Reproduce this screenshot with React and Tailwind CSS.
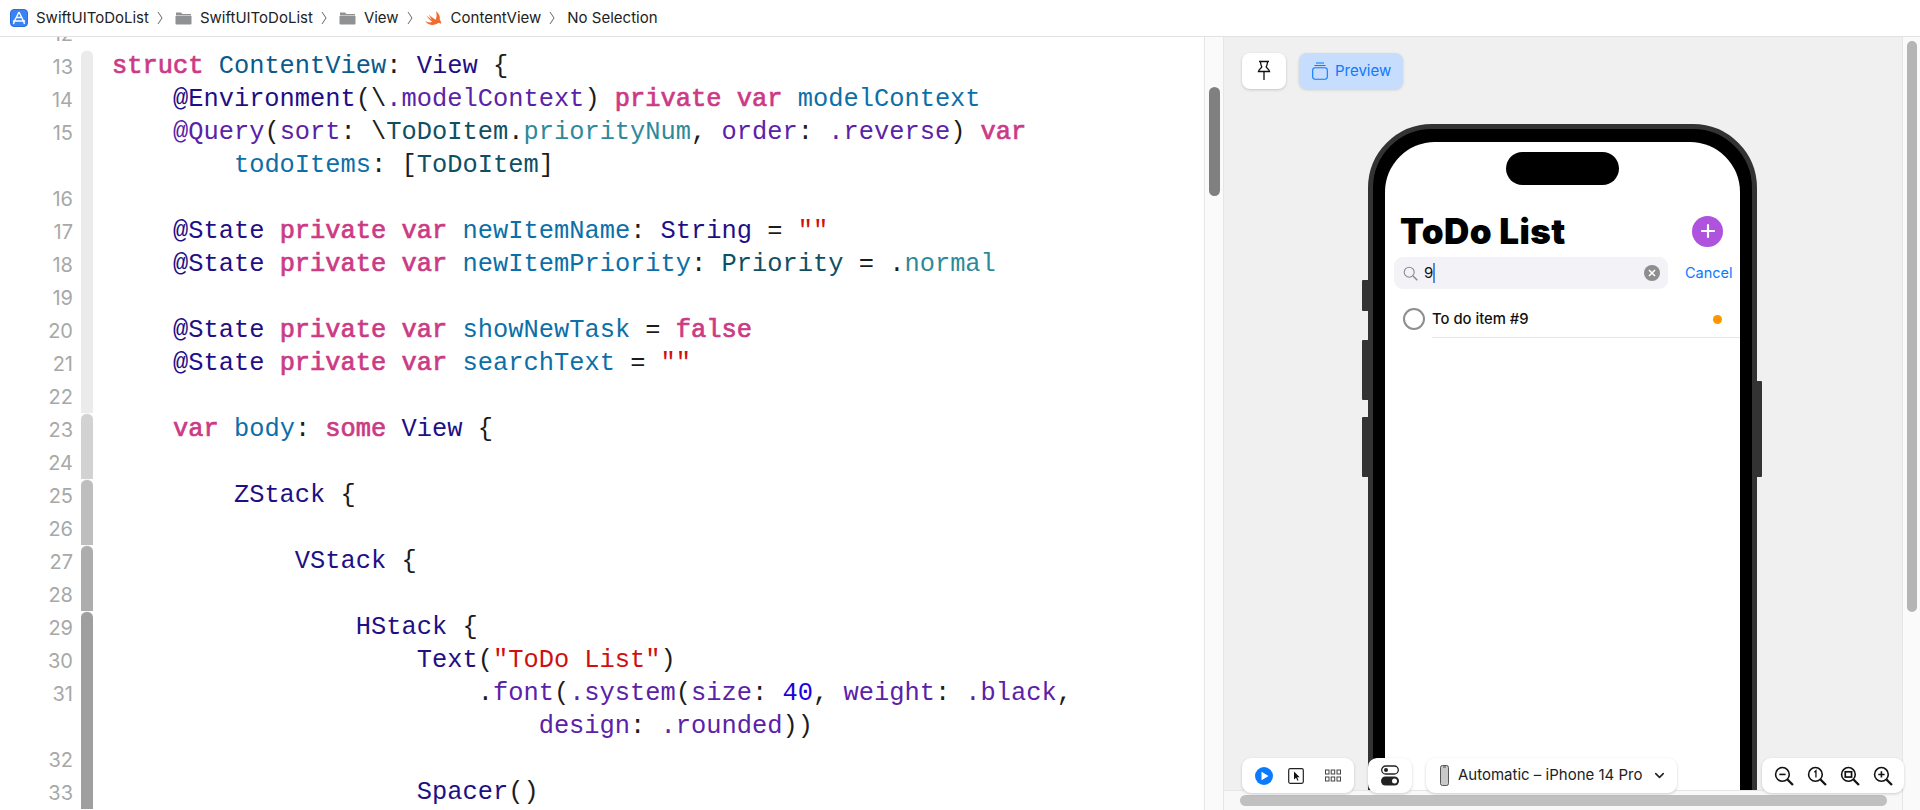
import React from "react";
import { ChevronDown } from "lucide-react";

const kw = "text-[#cc3a85] [-webkit-text-stroke:0.7px_#cc3a85]";
const navy = "text-[#1f0f85]";
const blue = "text-[#0b6fa8]";
const purple = "text-[#5b22a8]";
const teal = "text-[#2e8a9a]";
const type = "text-[#0f4f63]";
const decl = "text-[#0b5a8c]";
const red = "text-[#d01010]";
const num = "text-[#1c00e0]";

// n = line number (none on a wrapped row), top = first row of a ribbon segment
const rows = [
  { n: 12, ribbon: "" },
  { n: 13, top: true, ribbon: "bg-[#ebebeb]", tokens: [["struct", kw], " ", ["ContentView", decl], ": ", ["View", navy], " {"] },
  { n: 14, ribbon: "bg-[#ebebeb]", tokens: ["    ", ["@Environment", navy], "(\\", [".modelContext", purple], ") ", ["private", kw], " ", ["var", kw], " ", ["modelContext", blue]] },
  { n: 15, ribbon: "bg-[#ebebeb]", tokens: ["    ", ["@Query", purple], "(", ["sort", purple], ": \\", ["ToDoItem", type], ".", ["priorityNum", teal], ", ", ["order", purple], ": ", [".reverse", purple], ") ", ["var", kw]] },
  { ribbon: "bg-[#ebebeb]", tokens: ["        ", ["todoItems", blue], ": [", ["ToDoItem", type], "]"] },
  { n: 16, ribbon: "bg-[#ebebeb]" },
  { n: 17, ribbon: "bg-[#ebebeb]", tokens: ["    ", ["@State", navy], " ", ["private", kw], " ", ["var", kw], " ", ["newItemName", blue], ": ", ["String", navy], " = ", ['""', red]] },
  { n: 18, ribbon: "bg-[#ebebeb]", tokens: ["    ", ["@State", navy], " ", ["private", kw], " ", ["var", kw], " ", ["newItemPriority", blue], ": ", ["Priority", type], " = .", ["normal", teal]] },
  { n: 19, ribbon: "bg-[#ebebeb]" },
  { n: 20, ribbon: "bg-[#ebebeb]", tokens: ["    ", ["@State", navy], " ", ["private", kw], " ", ["var", kw], " ", ["showNewTask", blue], " = ", ["false", kw]] },
  { n: 21, ribbon: "bg-[#ebebeb]", tokens: ["    ", ["@State", navy], " ", ["private", kw], " ", ["var", kw], " ", ["searchText", blue], " = ", ['""', red]] },
  { n: 22, ribbon: "bg-[#ebebeb]" },
  { n: 23, top: true, ribbon: "bg-[#d2d2d2]", tokens: ["    ", ["var", kw], " ", ["body", blue], ": ", ["some", kw], " ", ["View", navy], " {"] },
  { n: 24, ribbon: "bg-[#d2d2d2]" },
  { n: 25, top: true, ribbon: "bg-[#bebebe]", tokens: ["        ", ["ZStack", navy], " {"] },
  { n: 26, ribbon: "bg-[#bebebe]" },
  { n: 27, top: true, ribbon: "bg-[#adadad]", tokens: ["            ", ["VStack", navy], " {"] },
  { n: 28, ribbon: "bg-[#adadad]" },
  { n: 29, top: true, ribbon: "bg-[#9f9f9f]", tokens: ["                ", ["HStack", navy], " {"] },
  { n: 30, ribbon: "bg-[#9f9f9f]", tokens: ["                    ", ["Text", navy], "(", ['"ToDo List"', red], ")"] },
  { n: 31, ribbon: "bg-[#9f9f9f]", tokens: ["                        .", ["font", purple], "(", [".system", purple], "(", ["size", purple], ": ", ["40", num], ", ", ["weight", purple], ": ", [".black", purple], ","] },
  { ribbon: "bg-[#9f9f9f]", tokens: ["                            ", ["design", purple], ": ", [".rounded", purple], "))"] },
  { n: 32, ribbon: "bg-[#9f9f9f]" },
  { n: 33, ribbon: "bg-[#9f9f9f]", tokens: ["                    ", ["Spacer", navy], "()"] },
];

function Chevron() {
  return (
    <svg width="6" height="14" viewBox="0 0 6 14" fill="none" stroke="#666" strokeWidth="1" className="shrink-0">
      <path d="M1 1l4 6-4 6" />
    </svg>
  );
}

function Folder() {
  return (
    <svg width="17" height="14" viewBox="0 0 17 14" fill="#8f9192" className="shrink-0">
      <path d="M1 1.5h5l1.5 1.5h8.500v1.500H1z" />
      <path d="M0.500 5h16v7.500a1 1 0 0 1-1 1h-14a1 1 0 0 1-1-1z" />
    </svg>
  );
}

function Crumb({ icon, label }) {
  return (
    <>
      {icon}
      <span className="ml-[8px]">{label}</span>
      <span className="mr-[12px] ml-[8px]"><Chevron /></span>
    </>
  );
}

function AppIcon() {
  return (
    <svg width="18" height="18" viewBox="0 0 18 18" className="shrink-0">
      <rect x="0.500" y="0.500" width="17" height="17" rx="3.500" fill="#3b82f6" stroke="#2a6fe0" />
      <path d="M9 3L4.500 12M9 3l4.500 9M3 12h12M7 8.500h4M4.500 12L3.500 15M13.500 12l1 3" stroke="#fff" strokeWidth="1.400" fill="none" />
    </svg>
  );
}

function SwiftIcon() {
  return (
    <svg width="18" height="17" viewBox="0 0 18 17" className="shrink-0">
      <path
        d="M11 1c3 2.500 4.600 5.800 3.700 8.600 1.200 1.600 1.600 3 1.400 4.400-.8-1-1.900-1.300-2.900-.9C11 14.900 7 15.600 4 14.300 2.500 13.700 1.200 12.600.5 11.300c2 1.300 4.700 1.600 6.800.5C5 10.200 2.800 8 1.300 5.600c2 1.800 4.300 3.400 6.200 4.400C6 8.500 4.600 6.500 3.700 4.400c2.500 2.300 5 4.200 7 5.300C11.800 7.400 12 4 11 1z"
        fill="#f26b2e"
      />
    </svg>
  );
}

function Breadcrumbs() {
  return (
    <div className="relative z-10 flex h-[37px] shrink-0 items-center border-b border-[#e2e2e2] bg-white pl-[10px] text-[15px] text-[#222]">
      <Crumb icon={<AppIcon />} label="SwiftUIToDoList" />
      <Crumb icon={<Folder />} label="SwiftUIToDoList" />
      <Crumb icon={<Folder />} label="View" />
      <Crumb icon={<SwiftIcon />} label="ContentView" />
      <span>No Selection</span>
    </div>
  );
}

function CodeRow({ row }) {
  return (
    <div className="flex h-[33px] items-center">
      <div className="w-[73px] shrink-0 text-right font-['Inter',sans-serif] text-[20px] text-[#a8a8a8]">{row.n}</div>
      <div className={`ml-[8px] h-full w-[12px] shrink-0 ${row.ribbon} ${row.top ? "rounded-t-[6px] border-t border-[#f4f4f4]" : ""}`} />
      <pre className="ml-[19px] font-['Liberation_Mono',monospace] text-[25.4px] leading-[33px] text-[#1c1c1c]">
        {(row.tokens || []).map((t, i) =>
          typeof t === "string" ? <span key={i}>{t}</span> : <span key={i} className={t[1]}>{t[0]}</span>
        )}
      </pre>
    </div>
  );
}

function Editor() {
  return (
    <div className="min-w-0 flex-1 overflow-hidden bg-white">
      <div className="-mt-[20px]">
        {rows.map((row, i) => <CodeRow key={i} row={row} />)}
      </div>
    </div>
  );
}

function PinIcon() {
  return (
    <svg width="16" height="22" viewBox="0 0 16 22" fill="none" stroke="#111" strokeWidth="1.300">
      <path d="M3 1.500h10M4.500 1.500c0 3 .8 4 1.300 5.500-.7 1.500-2.800 2.200-3.300 4.500h11c-.5-2.300-2.600-3-3.300-4.500.5-1.500 1.300-2.500 1.300-5.500M8 11.500V20" />
    </svg>
  );
}

function PreviewIcon() {
  return (
    <svg width="16" height="18" viewBox="0 0 16 18" fill="none" stroke="#0a7aff" strokeWidth="1.100">
      <path d="M4 1h8M2.500 3.500h11" />
      <rect x="0.700" y="5.700" width="14.600" height="11.600" rx="2.500" />
    </svg>
  );
}

function Phone() {
  return (
    <div className="relative h-[860px] w-[389px] shrink-0 rounded-[64px] border-[5px] border-[#333] bg-black px-[12px] pt-[13px]">
      <span className="absolute top-[151px] -left-[11px] h-[31px] w-[6px] rounded-l-[1px] bg-[#333]" />
      <span className="absolute top-[211px] -left-[11px] h-[60px] w-[6px] rounded-l-[1px] bg-[#333]" />
      <span className="absolute top-[288px] -left-[11px] h-[60px] w-[6px] rounded-l-[1px] bg-[#333]" />
      <span className="absolute top-[252px] -right-[10px] h-[96px] w-[5px] rounded-r-[1px] bg-[#333]" />
      <div className="h-full overflow-hidden rounded-[50px] bg-white pt-[10px]">
        <div className="mx-auto h-[33px] w-[113px] rounded-full bg-black" />
        <div className="mt-[26px] flex items-center justify-between pr-[17px] pl-[15px]">
          <span className="font-['Inter',sans-serif] text-[35px] leading-[40px] font-black tracking-[0.4px] text-black">ToDo List</span>
          <span className="flex h-[31px] w-[31px] items-center justify-center rounded-full bg-[#af52de]">
            <svg width="16" height="16" viewBox="0 0 16 16" stroke="#fff" strokeWidth="2.200" strokeLinecap="round"><path d="M8 2v12M2 8h12" /></svg>
          </span>
        </div>
        <div className="mt-[6px] flex items-center pl-[9px]">
          <div className="flex h-[32px] w-[274px] items-center rounded-[9px] bg-[#f2f2f7] pr-[8px] pl-[9px]">
            <svg width="15" height="15" viewBox="0 0 15 15" fill="none" stroke="#8a8a8e" strokeWidth="1.100"><circle cx="6.200" cy="6.200" r="5" /><path d="M10 10l4.300 4.300" strokeWidth="1.500" /></svg>
            <span className="ml-[6px] font-['Inter',sans-serif] text-[15px] text-[#111]">9</span>
            <span className="h-[20px] w-[1.500px] bg-[#4a90e8]" />
            <span className="ml-auto flex h-[16px] w-[16px] items-center justify-center rounded-full bg-[#8e8e8e]">
              <svg width="8" height="8" viewBox="0 0 8 8" stroke="#fff" strokeWidth="1.600"><path d="M1 1l6 6M7 1L1 7" /></svg>
            </span>
          </div>
          <span className="ml-[17px] font-['Inter',sans-serif] text-[14.500px] text-[#0a7aff]">Cancel</span>
        </div>
        <div className="mt-[12px] flex h-[36px] items-center pr-[18px] pl-[18px]">
          <span className="h-[22px] w-[22px] shrink-0 rounded-full border-[2.500px] border-[#8e8e8e]" />
          <span className="ml-[7px] font-['Inter',sans-serif] text-[14.800px] font-[450] text-[#111]">To do item #9</span>
          <span className="ml-auto h-[9px] w-[9px] rounded-full bg-[#ff9500]" />
        </div>
        <div className="ml-[47px] h-px bg-[#e5e5ea]" />
      </div>
    </div>
  );
}

function Magnifier({ children }) {
  return (
    <svg width="20" height="20" viewBox="0 0 19 19" fill="none" stroke="#111" strokeWidth="1.500">
      <circle cx="8" cy="8" r="6.500" />
      <path d="M12.800 12.800L18 18" strokeWidth="2.200" />
      {children}
    </svg>
  );
}

function BottomBar() {
  const tool = "flex h-[35px] items-center rounded-[9px] bg-white shadow-[0_1px_3px_rgba(0,0,0,0.18)]";
  return (
    <div className="absolute right-[-2px] bottom-[17px] left-[18px] flex items-center">
      <div className={`${tool} w-[112px] pl-[13px]`}>
        <svg width="18" height="18" viewBox="0 0 18 18"><circle cx="9" cy="9" r="9" fill="#0a7aff" /><path d="M6.500 4.800v8.400L13.500 9z" fill="#fff" /></svg>
        <svg width="16" height="16" viewBox="0 0 16 16" fill="none" className="ml-[15px]"><rect x="0.700" y="0.700" width="14.600" height="14.600" rx="1.500" stroke="#222" strokeWidth="1.200" /><path d="M6 3.500v8l2-1.800 1.500 3 1-.5-1.400-3h2.600z" fill="#111" /></svg>
        <svg width="16" height="14" viewBox="0 0 16 14" fill="none" stroke="#444" strokeWidth="1" className="ml-[21px]">
          <rect x="0.500" y="1" width="3.500" height="4" /><rect x="6.200" y="1" width="3.500" height="4" /><rect x="12" y="1" width="3.500" height="4" />
          <rect x="0.500" y="8" width="3.500" height="4" /><rect x="6.200" y="8" width="3.500" height="4" /><rect x="12" y="8" width="3.500" height="4" />
        </svg>
      </div>
      <div className={`${tool} ml-[14px] w-[44px] justify-center`}>
        <svg width="18" height="21" viewBox="0 0 18 21" fill="none">
          <rect x="0.700" y="1" width="16.600" height="8" rx="4" stroke="#222" strokeWidth="1.300" /><circle cx="5" cy="5" r="2" fill="#222" />
          <rect x="0" y="11.500" width="18" height="9" rx="4.500" fill="#222" /><circle cx="13.500" cy="16" r="2.500" fill="#fff" />
        </svg>
      </div>
      <div className={`${tool} ml-[14px] w-[251px] pl-[14px] font-['Inter',sans-serif] text-[15px] text-[#222]`}>
        <svg width="9" height="21" viewBox="0 0 9 21" fill="none" className="mr-[9px]"><rect x="0.500" y="0.500" width="8" height="20" rx="2" fill="#c8c8c8" stroke="#555" /><path d="M3 2h3" stroke="#555" /></svg>
        Automatic – iPhone 14 Pro
        <ChevronDown size={15} strokeWidth={2.500} className="ml-[10px] text-[#222]" />
      </div>
      <div className={`${tool} ml-auto w-[142px] justify-center gap-[13px]`}>
        <Magnifier><path d="M5 8h6" /></Magnifier>
        <Magnifier><path d="M7 6l1.500-1.500V11" strokeWidth="1.200" /></Magnifier>
        <Magnifier><rect x="5" y="5.500" width="6" height="5" strokeWidth="1.600" /></Magnifier>
        <Magnifier><path d="M5 8h6M8 5v6" /></Magnifier>
      </div>
    </div>
  );
}

function Preview() {
  return (
    <div className="relative flex w-[678px] shrink-0 flex-col bg-[#f0f0f0]">
      <div className="min-h-0 flex-1 overflow-hidden px-[18px] pt-[16px]">
        <div className="flex gap-[13px]">
          <button className="flex h-[36px] w-[44px] items-center justify-center rounded-[8px] bg-white shadow-[0_1px_3px_rgba(0,0,0,0.18)]"><PinIcon /></button>
          <button className="flex h-[36px] w-[104px] items-center gap-[7px] rounded-[8px] bg-[#c7ddfd] pl-[13px] font-['Inter',sans-serif] text-[15px] text-[#0a7aff] shadow-[0_1px_3px_rgba(0,0,0,0.15)]">
            <PreviewIcon />Preview
          </button>
        </div>
        <div className="mt-[35px] flex justify-center pr-px"><Phone /></div>
      </div>
      <div className="flex h-[20px] shrink-0 items-center border-t border-[#e6e6e6] bg-[#f8f8f8] pl-[16px]">
        <div className="h-[11px] w-[647px] rounded-full bg-[#c0c0c0]" />
      </div>
      <BottomBar />
    </div>
  );
}

export default function App() {
  return (
    <div className="flex h-[810px] w-[1920px] flex-col overflow-hidden bg-white font-['Inter',sans-serif]">
      <Breadcrumbs />
      <div className="flex min-h-0 flex-1">
        <Editor />
        <div className="flex w-[20px] shrink-0 justify-center border-x border-[#e6e6e6] bg-[#fafafa] pt-[50px]">
          <div className="h-[109px] w-[11px] rounded-full bg-[#808080]" />
        </div>
        <Preview />
        <div className="flex w-[18px] shrink-0 justify-center border-l border-[#e6e6e6] bg-[#fafafa] pt-[4px]">
          <div className="h-[571px] w-[10px] rounded-full bg-[#b5b5b5]" />
        </div>
      </div>
    </div>
  );
}
